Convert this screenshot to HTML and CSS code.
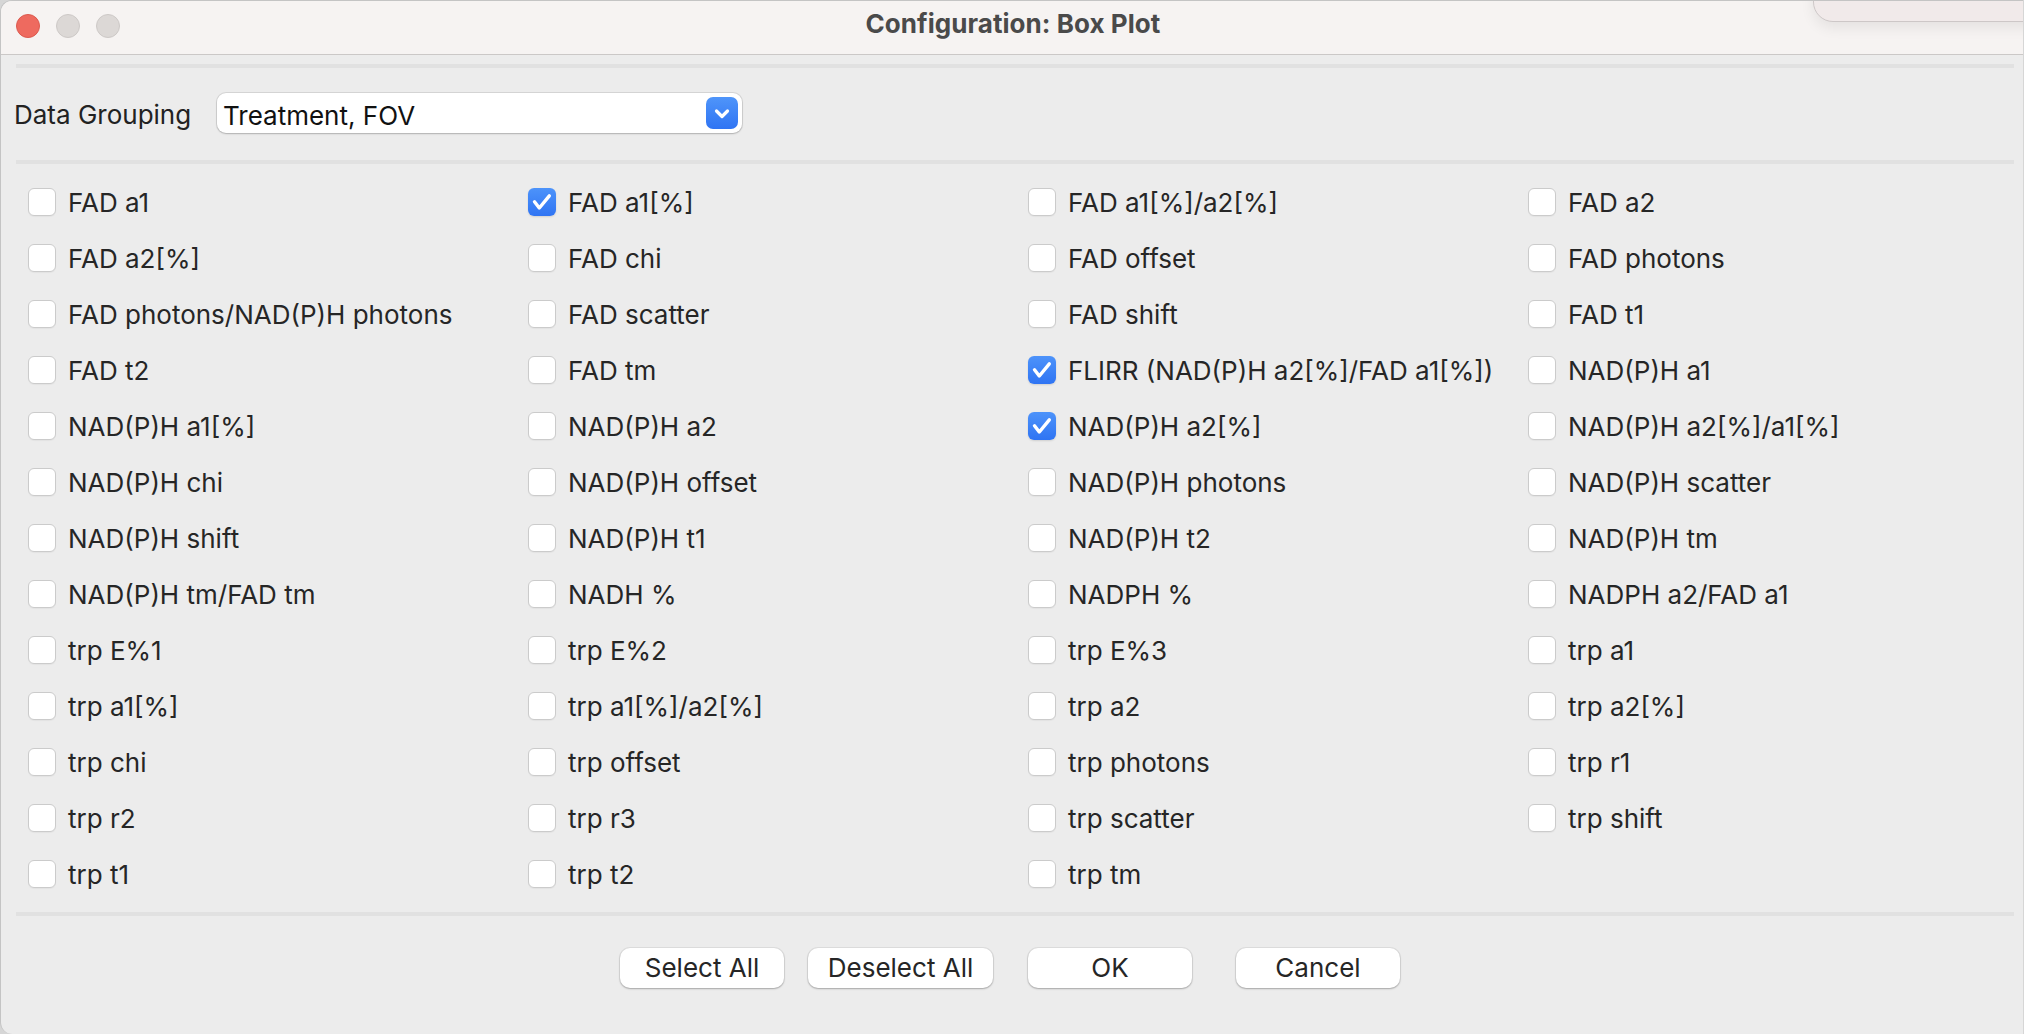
FILE: index.html
```html
<!DOCTYPE html>
<html lang="en">
<head>
<meta charset="utf-8">
<title>Configuration: Box Plot</title>
<link rel="stylesheet" href="styles.css">
</head>
<body>
<div class="window">
  <div class="other-window"></div>
  <header class="titlebar">
    <div class="lights">
      <span class="light red"></span>
      <span class="light gray"></span>
      <span class="light gray"></span>
    </div>
    <div class="title">Configuration: Box Plot</div>
    <div></div>
  </header>

  <div class="sep sep-top"></div>

  <div class="grouping">
    <label class="grouping-label">Data Grouping</label>
    <div class="select">
      <span class="select-text">Treatment, FOV</span>
      <span class="select-btn">
        <svg width="32" height="32" viewBox="0 0 32 32"><path d="M10.5 14 L16 19.5 L21.5 14" fill="none" stroke="#fff" stroke-width="3.2" stroke-linecap="round" stroke-linejoin="round"/></svg>
      </span>
    </div>
  </div>

  <div class="sep sep-mid"></div>

  <div class="grid">
    <div class="item"><span class="cb"></span><span class="lbl">FAD a1</span></div>
    <div class="item"><span class="cb on"><svg width="28" height="28" viewBox="0 0 28 28"><path d="M6.5 13.8 L11.3 20 L21.3 7.8" fill="none" stroke="#fff" stroke-width="3.4" stroke-linecap="round" stroke-linejoin="round"/></svg></span><span class="lbl">FAD a1[%]</span></div>
    <div class="item"><span class="cb"></span><span class="lbl">FAD a1[%]/a2[%]</span></div>
    <div class="item"><span class="cb"></span><span class="lbl">FAD a2</span></div>

    <div class="item"><span class="cb"></span><span class="lbl">FAD a2[%]</span></div>
    <div class="item"><span class="cb"></span><span class="lbl">FAD chi</span></div>
    <div class="item"><span class="cb"></span><span class="lbl">FAD offset</span></div>
    <div class="item"><span class="cb"></span><span class="lbl">FAD photons</span></div>

    <div class="item"><span class="cb"></span><span class="lbl">FAD photons/NAD(P)H photons</span></div>
    <div class="item"><span class="cb"></span><span class="lbl">FAD scatter</span></div>
    <div class="item"><span class="cb"></span><span class="lbl">FAD shift</span></div>
    <div class="item"><span class="cb"></span><span class="lbl">FAD t1</span></div>

    <div class="item"><span class="cb"></span><span class="lbl">FAD t2</span></div>
    <div class="item"><span class="cb"></span><span class="lbl">FAD tm</span></div>
    <div class="item"><span class="cb on"><svg width="28" height="28" viewBox="0 0 28 28"><path d="M6.5 13.8 L11.3 20 L21.3 7.8" fill="none" stroke="#fff" stroke-width="3.4" stroke-linecap="round" stroke-linejoin="round"/></svg></span><span class="lbl">FLIRR (NAD(P)H a2[%]/FAD a1[%])</span></div>
    <div class="item"><span class="cb"></span><span class="lbl">NAD(P)H a1</span></div>

    <div class="item"><span class="cb"></span><span class="lbl">NAD(P)H a1[%]</span></div>
    <div class="item"><span class="cb"></span><span class="lbl">NAD(P)H a2</span></div>
    <div class="item"><span class="cb on"><svg width="28" height="28" viewBox="0 0 28 28"><path d="M6.5 13.8 L11.3 20 L21.3 7.8" fill="none" stroke="#fff" stroke-width="3.4" stroke-linecap="round" stroke-linejoin="round"/></svg></span><span class="lbl">NAD(P)H a2[%]</span></div>
    <div class="item"><span class="cb"></span><span class="lbl">NAD(P)H a2[%]/a1[%]</span></div>

    <div class="item"><span class="cb"></span><span class="lbl">NAD(P)H chi</span></div>
    <div class="item"><span class="cb"></span><span class="lbl">NAD(P)H offset</span></div>
    <div class="item"><span class="cb"></span><span class="lbl">NAD(P)H photons</span></div>
    <div class="item"><span class="cb"></span><span class="lbl">NAD(P)H scatter</span></div>

    <div class="item"><span class="cb"></span><span class="lbl">NAD(P)H shift</span></div>
    <div class="item"><span class="cb"></span><span class="lbl">NAD(P)H t1</span></div>
    <div class="item"><span class="cb"></span><span class="lbl">NAD(P)H t2</span></div>
    <div class="item"><span class="cb"></span><span class="lbl">NAD(P)H tm</span></div>

    <div class="item"><span class="cb"></span><span class="lbl">NAD(P)H tm/FAD tm</span></div>
    <div class="item"><span class="cb"></span><span class="lbl">NADH %</span></div>
    <div class="item"><span class="cb"></span><span class="lbl">NADPH %</span></div>
    <div class="item"><span class="cb"></span><span class="lbl">NADPH a2/FAD a1</span></div>

    <div class="item"><span class="cb"></span><span class="lbl">trp E%1</span></div>
    <div class="item"><span class="cb"></span><span class="lbl">trp E%2</span></div>
    <div class="item"><span class="cb"></span><span class="lbl">trp E%3</span></div>
    <div class="item"><span class="cb"></span><span class="lbl">trp a1</span></div>

    <div class="item"><span class="cb"></span><span class="lbl">trp a1[%]</span></div>
    <div class="item"><span class="cb"></span><span class="lbl">trp a1[%]/a2[%]</span></div>
    <div class="item"><span class="cb"></span><span class="lbl">trp a2</span></div>
    <div class="item"><span class="cb"></span><span class="lbl">trp a2[%]</span></div>

    <div class="item"><span class="cb"></span><span class="lbl">trp chi</span></div>
    <div class="item"><span class="cb"></span><span class="lbl">trp offset</span></div>
    <div class="item"><span class="cb"></span><span class="lbl">trp photons</span></div>
    <div class="item"><span class="cb"></span><span class="lbl">trp r1</span></div>

    <div class="item"><span class="cb"></span><span class="lbl">trp r2</span></div>
    <div class="item"><span class="cb"></span><span class="lbl">trp r3</span></div>
    <div class="item"><span class="cb"></span><span class="lbl">trp scatter</span></div>
    <div class="item"><span class="cb"></span><span class="lbl">trp shift</span></div>

    <div class="item"><span class="cb"></span><span class="lbl">trp t1</span></div>
    <div class="item"><span class="cb"></span><span class="lbl">trp t2</span></div>
    <div class="item"><span class="cb"></span><span class="lbl">trp tm</span></div>
  </div>

  <div class="sep sep-bottom"></div>

  <div class="buttons">
    <button class="btn btn-select">Select All</button>
    <button class="btn btn-deselect">Deselect All</button>
    <button class="btn btn-ok">OK</button>
    <button class="btn btn-cancel">Cancel</button>
  </div>
</div>
</body>
</html>
```

FILE: styles.css
```css
html, body {
  margin: 0;
  padding: 0;
}

body {
  background: #d6d6d6;
  font-family: Inter, "Noto Sans", "Liberation Sans", sans-serif;
  color: #262626;
}

.window {
  position: relative;
  width: 2023px;
  height: 1034px;
  box-sizing: border-box;
  background: #ececec;
  border-left: 1px solid #c4c4c4;
  border-top: 1px solid #c4c4c4;
  border-radius: 12px 0 0 12px;
  overflow: hidden;
  margin-left: 0;
}

.other-window {
  position: absolute;
  left: 1812px;
  top: -40px;
  width: 260px;
  height: 59px;
  background: #f1eaea;
  border: 1px solid #cdc7c7;
  border-radius: 20px;
  box-shadow: 0 6px 14px rgba(0, 0, 0, 0.07);
  z-index: 2;
}

.titlebar {
  display: grid;
  grid-template-columns: 1fr auto 1fr;
  align-items: start;
  height: 53px;
  background: #f6f3f2;
  border-bottom: 1px solid #cbc8c7;
}

.lights {
  display: flex;
  gap: 16px;
  padding: 13px 0 0 15px;
}

.light {
  width: 22px;
  height: 22px;
  border-radius: 50%;
  display: block;
}

.light.red {
  background: #ee6a5f;
  border: 1px solid #dc5a4f;
}

.light.gray {
  background: #dcd8d6;
  border: 1px solid #cdc9c7;
}

.title {
  padding-top: 7px;
  padding-left: 2px;
  font-size: 26px;
  line-height: 32px;
  font-weight: 700;
  color: #4a4a4a;
  letter-spacing: 0.05px;
}

.sep {
  height: 4px;
  background: #e1e1e1;
  margin-left: 15px;
  margin-right: 9px;
}

.sep-top {
  margin-top: 9px;
}

.grouping {
  display: flex;
  align-items: center;
  padding-left: 13px;
  margin-top: 25px;
  height: 40px;
}

.grouping-label {
  flex: 0 0 203px;
  font-size: 26px;
  line-height: 30px;
  padding-top: 4px;
  color: #222;
}

.select {
  width: 525px;
  height: 40px;
  box-sizing: border-box;
  background: #fff;
  border-radius: 9px;
  box-shadow: 0 0 0 1px rgba(0, 0, 0, 0.09), 0 1px 2px rgba(0, 0, 0, 0.18);
  display: flex;
  align-items: center;
  justify-content: space-between;
  padding: 0 4px 0 6px;
}

.select-text {
  font-size: 26px;
  line-height: 30px;
  padding-top: 5px;
  color: #111;
}

.select-btn {
  width: 32px;
  height: 32px;
  border-radius: 7px;
  background: linear-gradient(#4f95fa, #2f74f3);
  display: block;
}

.select-btn svg {
  display: block;
}

.sep-mid {
  margin-top: 27px;
}

.grid {
  display: grid;
  grid-template-columns: repeat(4, 500px);
  grid-auto-rows: 56px;
  padding-left: 27px;
  margin-top: 10px;
}

.item {
  display: flex;
  align-items: center;
  gap: 12px;
}

.cb {
  width: 28px;
  height: 28px;
  box-sizing: border-box;
  flex: 0 0 28px;
  background: #fff;
  border: 1px solid #cbcbcb;
  border-radius: 6px;
  box-shadow: 0 1px 1px rgba(0, 0, 0, 0.04);
  display: block;
}

.cb.on {
  background: linear-gradient(#4d93fa, #2f74f3);
  border: none;
  box-shadow: 0 1px 2px rgba(0, 0, 0, 0.12);
}

.cb svg {
  display: block;
}

.lbl {
  font-size: 26px;
  line-height: 30px;
  padding-top: 2px;
  color: #262626;
  white-space: nowrap;
}

.sep-bottom {
  margin-top: 10px;
}

.buttons {
  display: flex;
  padding-left: 619px;
  margin-top: 32px;
}

.btn {
  height: 40px;
  width: 164px;
  border: none;
  border-radius: 10px;
  background: #fff;
  box-shadow: 0 0 0 1px rgba(0, 0, 0, 0.06), 0 1px 2px rgba(0, 0, 0, 0.25);
  font-family: Inter, "Noto Sans", "Liberation Sans", sans-serif;
  font-size: 26px;
  line-height: 30px;
  color: #262626;
  padding: 0;
}

.btn-deselect {
  width: 185px;
  margin-left: 24px;
}

.btn-ok {
  margin-left: 35px;
}

.btn-cancel {
  margin-left: 44px;
}
```
